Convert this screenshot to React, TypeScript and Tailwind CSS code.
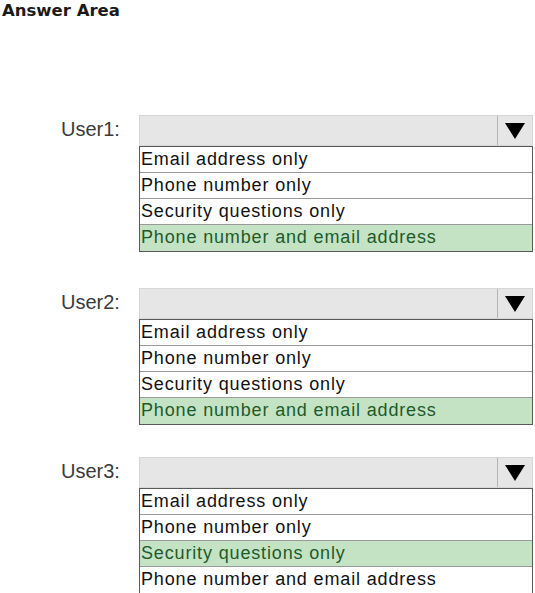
const OPTIONS = [
  'Email address only',
  'Phone number only',
  'Security questions only',
  'Phone number and email address',
];

const USERS = [
  { label: 'User1:', selected: 3, gap: 'mt-0' },
  { label: 'User2:', selected: 3, gap: 'mt-[36px]' },
  { label: 'User3:', selected: 2, gap: 'mt-[32px]' },
];

function Dropdown({ selected }: { selected: number }) {
  return (
    <div className="w-[394px]">
      <div className="flex h-[31px] border border-[#d6d6d6] bg-[#e6e6e6]">
        <div className="flex-1" />
        <div className="flex w-[35px] items-center justify-center border-l border-[#b4b4b4]">
          <svg width="20" height="16" viewBox="0 0 20 16">
            <polygon points="0,0 20,0 10,16" fill="#000" />
          </svg>
        </div>
      </div>
      <div className="divide-y divide-[#9a9a9a] border border-[#5a5a5a]">
        {OPTIONS.map((opt, i) => (
          <div
            key={opt}
            className={
              i === selected
                ? 'h-[26px] bg-[#c4e3c4] pl-[1px] text-[18px] leading-[25px] tracking-[0.85px] text-[#1f5a2a]'
                : 'h-[26px] bg-white pl-[1px] text-[18px] leading-[25px] tracking-[0.85px] text-[#111]'
            }
          >
            {opt}
          </div>
        ))}
      </div>
    </div>
  );
}

export default function App() {
  return (
    <div className="h-[593px] w-[535px] overflow-hidden bg-white pl-[2px] pt-[1px] font-['Liberation_Sans',Arial,sans-serif]">
      <div className="font-['DejaVu_Sans',sans-serif] text-[16.5px] font-bold leading-[20px] text-[#1a1a1a]">
        Answer Area
      </div>
      <div className="mt-[94px] flex flex-col">
        {USERS.map((u) => (
          <div key={u.label} className={`${u.gap} flex items-start pl-[59px]`}>
            <div className="w-[78px] pt-[3px] text-[20px] leading-[23px] text-[#3a3a3a]">{u.label}</div>
            <Dropdown selected={u.selected} />
          </div>
        ))}
      </div>
    </div>
  );
}
